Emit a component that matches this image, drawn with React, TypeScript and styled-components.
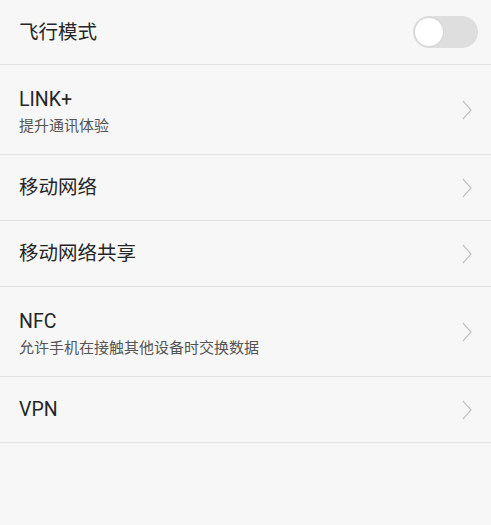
import React, { useState } from "react"
import styled, { createGlobalStyle } from "styled-components"

const GlobalStyle = createGlobalStyle`
  html, body {
    margin: 0;
    padding: 0;
    background: #f7f7f7;
  }
  body {
    font-family: Roboto, "Noto Sans CJK SC", sans-serif;
  }
`

type Item = {
  title: string
  subtitle?: string
  toggle?: boolean
}

const items: Item[] = [
  { title: "飞行模式", toggle: true },
  { title: "LINK+", subtitle: "提升通讯体验" },
  { title: "移动网络" },
  { title: "移动网络共享" },
  { title: "NFC", subtitle: "允许手机在接触其他设备时交换数据" },
  { title: "VPN" },
]

const Chevron = () => (
  <ChevronIcon viewBox="0 0 10 20">
    <path d="M1 1 L9 10 L1 19" fill="none" stroke="#c4c4c4" strokeWidth="1.2" />
  </ChevronIcon>
)

export default function App() {
  const [airplane, setAirplane] = useState(false)

  return (
    <>
      <GlobalStyle />
      <Page>
        <List>
          {items.map((item) => (
            <Row key={item.title} tall={!!item.subtitle}>
              <TextBlock tall={!!item.subtitle}>
                <Title>{item.title}</Title>
                {item.subtitle && <Subtitle>{item.subtitle}</Subtitle>}
              </TextBlock>
              {item.toggle ? (
                <Switch on={airplane} onClick={() => setAirplane(!airplane)}>
                  <Knob on={airplane} />
                </Switch>
              ) : (
                <Chevron />
              )}
            </Row>
          ))}
        </List>
      </Page>
    </>
  )
}

const Page = styled.div`
  width: 491px;
  height: 525px;
  background: #f7f7f7;
  overflow: hidden;
`

const List = styled.ul`
  list-style: none;
  margin: 0;
  padding: 0;
`

const Row = styled.li<{ tall: boolean }>`
  display: flex;
  align-items: center;
  justify-content: space-between;
  height: ${(p) => (p.tall ? "89px" : "65px")};
  padding: 0 13px 0 19px;
  border-bottom: 1px solid #e3e3e3;
  box-sizing: content-box;

  &:first-child {
    height: 64px;
  }
`

const TextBlock = styled.div<{ tall: boolean }>`
  display: flex;
  flex-direction: column;
  gap: 4px;
  padding-top: ${(p) => (p.tall ? "5px" : "1px")};
`

const Title = styled.div`
  font-size: 19.5px;
  line-height: 24px;
  color: #262626;
`

const Subtitle = styled.div`
  font-size: 15px;
  line-height: 20px;
  color: #555555;
`

const Switch = styled.div<{ on: boolean }>`
  display: flex;
  align-items: center;
  width: 65px;
  height: 32px;
  border-radius: 16px;
  background: ${(p) => (p.on ? "#2ab15a" : "#dedede")};
  padding: 0 2px;
  box-sizing: border-box;
  cursor: pointer;
`

const Knob = styled.div<{ on: boolean }>`
  width: 28px;
  height: 28px;
  border-radius: 50%;
  background: #ffffff;
  box-shadow: 0 0 2px rgba(0, 0, 0, 0.12);
  margin-left: ${(p) => (p.on ? "33px" : "0")};
`

const ChevronIcon = styled.svg`
  width: 10px;
  height: 20px;
  margin-right: 6px;
`
